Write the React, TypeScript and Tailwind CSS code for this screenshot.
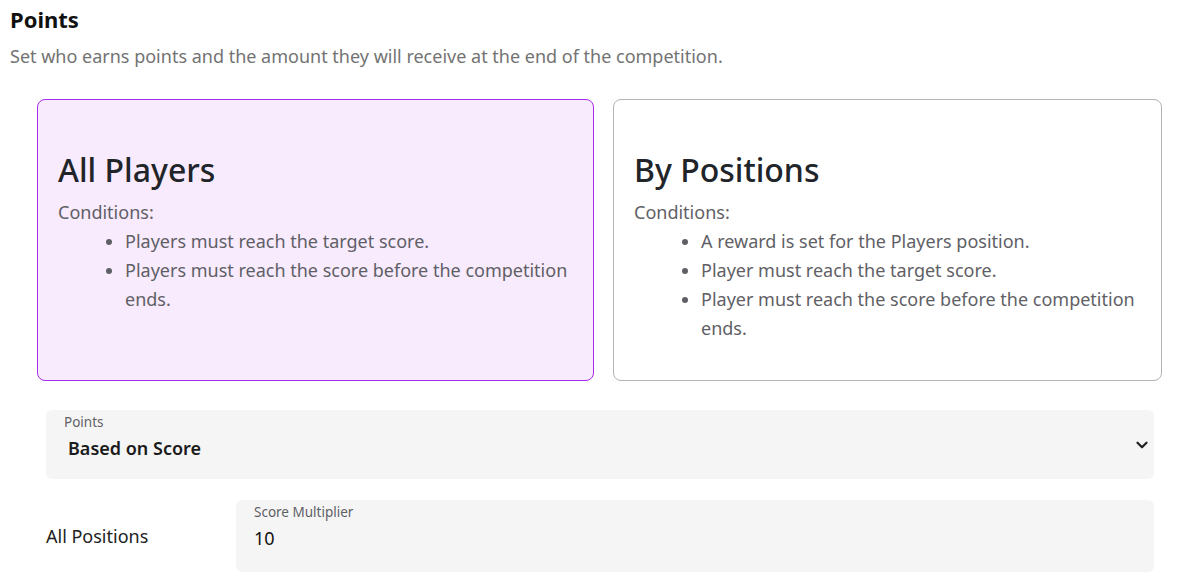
import { ChevronDown } from "lucide-react";

const font = { fontFamily: '"Noto Sans", "Open Sans", sans-serif' };

function OptionCard({
  title,
  items,
  selected,
  className,
}: {
  title: string;
  items: string[];
  selected?: boolean;
  className?: string;
}) {
  return (
    <div
      className={
        (selected
          ? "rounded-lg border border-[#a62cf0] bg-[#f8ebfd] px-5 pt-[46px] pb-10 "
          : "rounded-lg border border-[#b3b3b3] bg-white px-5 pt-[46px] pb-10 ") + (className ?? "")
      }
    >
      <h2 className="text-[32px] font-medium leading-[48px] text-[#212529]">{title}</h2>
      <p className="mt-[5px] text-[18px] leading-[26px] text-[#5f5f66]">Conditions:</p>
      <ul className="mt-[2px] list-disc pl-[67px] text-[18px] leading-[29px] text-[#5f5f66]">
        {items.map((t) => (
          <li key={t}>{t}</li>
        ))}
      </ul>
    </div>
  );
}

export default function App() {
  return (
    <div className="bg-white px-[10px] pt-[4px]" style={font}>
      <h1 className="text-[22px] font-bold leading-[30px] text-[#111]">Points</h1>
      <p className="mt-[9px] text-[18px] leading-[26px] text-[#737373]">
        Set who earns points and the amount they will receive at the end of the competition.
      </p>
      <div className="mt-[30px] flex h-[282px] gap-[19px] pl-[27px] pr-[9px]">
        <OptionCard
          selected
          className="w-[557px]"
          title="All Players"
          items={[
            "Players must reach the target score.",
            "Players must reach the score before the competition ends.",
          ]}
        />
        <OptionCard
          className="flex-1"
          title="By Positions"
          items={[
            "A reward is set for the Players position.",
            "Player must reach the target score.",
            "Player must reach the score before the competition ends.",
          ]}
        />
      </div>
      <div className="ml-[36px] mr-[17px] mt-[29px] flex h-[69px] items-start justify-between rounded-md bg-[#f5f5f5] pl-[18px] pr-[3px] pt-[4px]">
        <div>
          <div className="text-[13.5px] leading-[16px] text-[#5f5f66]">Points</div>
          <div className="mt-[6px] pl-1 text-[18px] font-semibold leading-[24px] text-[#1b1b1b]">
            Based on Score
          </div>
        </div>
        <ChevronDown className="mt-[22px] h-[18px] w-[18px] text-[#222]" strokeWidth={3} />
      </div>
      <div className="ml-[36px] mr-[17px] mt-[21px] flex items-center">
        <div className="w-[190px] text-[18px] text-[#222]">All Positions</div>
        <div className="flex h-[72px] flex-1 flex-col rounded-md bg-[#f5f5f5] px-[18px] pt-[4px]">
          <div className="text-[13.5px] leading-[16px] text-[#5f5f66]">Score Multiplier</div>
          <div className="mt-[6px] text-[18px] leading-[24px] text-[#111]">10</div>
        </div>
      </div>
    </div>
  );
}
